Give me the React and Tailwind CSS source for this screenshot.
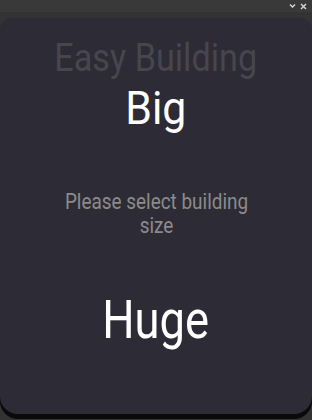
export default function App() {
  return (
    <div className="flex h-[420px] w-[312px] flex-col bg-[#3a3a3a] font-['Roboto',sans-serif]">
      <div className="flex h-[12px] items-center justify-end gap-[4px] bg-[#393939] pr-[5px]">
        <svg width="7" height="6" viewBox="0 0 7 6" className="text-[#d8d8d8]">
          <path d="M1 1.5 L3.5 4 L6 1.5" stroke="currentColor" strokeWidth="1.4" fill="none" />
        </svg>
        <svg width="7" height="7" viewBox="0 0 7 7" className="text-[#d8d8d8]">
          <path d="M1 1 L6 6 M6 1 L1 6" stroke="currentColor" strokeWidth="1.4" fill="none" />
        </svg>
      </div>
      <div className="flex-1 bg-[#333333] pt-[6px] pb-[6px]">
        <div className="flex h-full flex-col items-center rounded-t-[12px] rounded-b-[18px] bg-[#2d2b35] shadow-[0_5px_0_#0a0a0a]">
          <div className="mt-[18px] scale-x-[0.9] whitespace-nowrap text-[38px] leading-[44px] text-[#47464f]">
            Easy Building
          </div>
          <div className="mt-[2px] scale-x-[0.93] text-[46px] leading-[52px] text-white">Big</div>
          <div className="mt-[56px] flex scale-x-[0.86] flex-col items-center whitespace-nowrap text-[22px] leading-[24px] text-[#8b8b8b]">
            <span>Please select building</span>
            <span>size</span>
          </div>
          <div className="mt-[52px] scale-x-[0.84] text-[54px] leading-[60px] text-white">Huge</div>
        </div>
      </div>
    </div>
  )
}
